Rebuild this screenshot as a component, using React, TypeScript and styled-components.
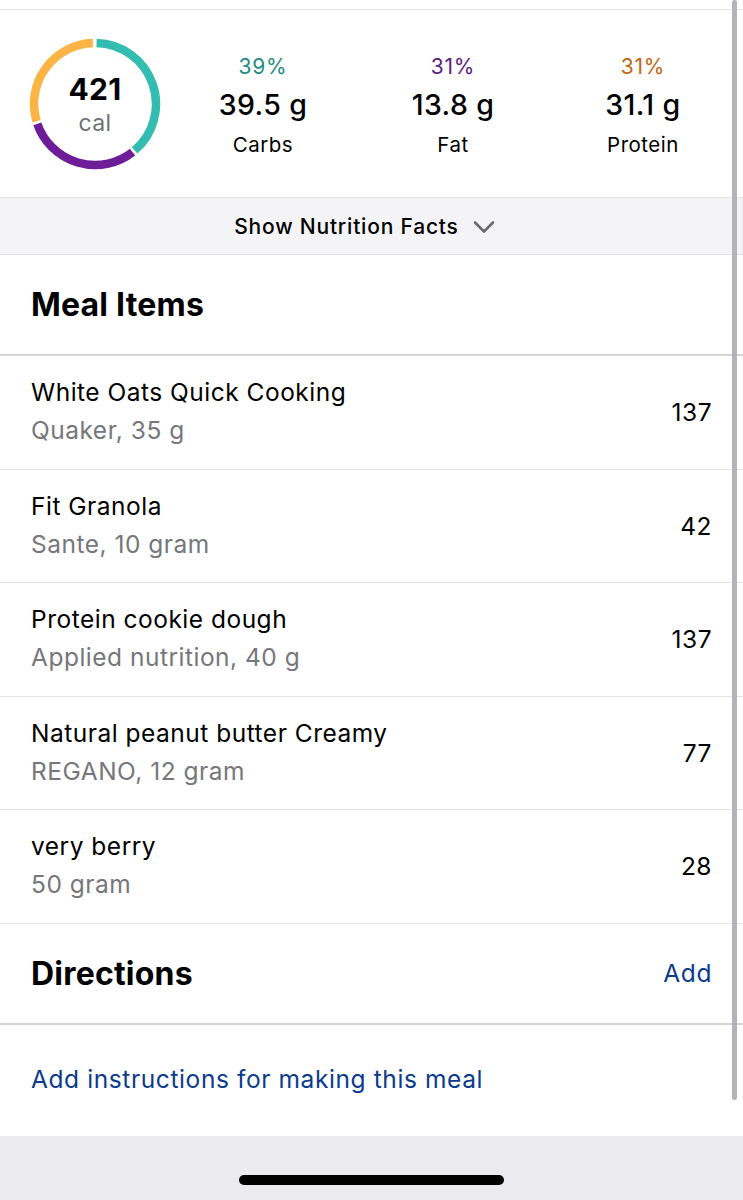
import styled, { createGlobalStyle } from "styled-components";

const GlobalStyle = createGlobalStyle`
    html, body {
        margin: 0;
        padding: 0;
        background: #fff;
    }
    body {
        font-family: "Inter", "Liberation Sans", sans-serif;
        -webkit-font-smoothing: antialiased;
    }
`;

type MealItem = {
    name: string;
    detail: string;
    calories: number;
};

const items: MealItem[] = [
    {name: "White Oats Quick Cooking", detail: "Quaker, 35 g", calories: 137},
    {name: "Fit Granola", detail: "Sante, 10 gram", calories: 42},
    {name: "Protein cookie dough", detail: "Applied nutrition, 40 g", calories: 137},
    {name: "Natural peanut butter Creamy", detail: "REGANO, 12 gram", calories: 77},
    {name: "very berry", detail: "50 gram", calories: 28},
];

const macros = [
    {percent: "39%", amount: "39.5 g", label: "Carbs", color: "#1f8a7f"},
    {percent: "31%", amount: "13.8 g", label: "Fat", color: "#5c1d7f"},
    {percent: "31%", amount: "31.1 g", label: "Protein", color: "#c1660f"},
];

// donut segments, degrees clockwise from 12 o'clock
const segments = [
    {from: 1.5, to: 139.5, color: "#33bdb0"},
    {from: 142, to: 251, color: "#6c1d97"},
    {from: 253.5, to: 358, color: "#fbb445"},
];

const arcPath = (cx: number, cy: number, r: number, from: number, to: number) => {
    const rad = (d: number) => ((d - 90) * Math.PI) / 180;
    const x1 = cx + r * Math.cos(rad(from));
    const y1 = cy + r * Math.sin(rad(from));
    const x2 = cx + r * Math.cos(rad(to));
    const y2 = cy + r * Math.sin(rad(to));
    const large = to - from > 180 ? 1 : 0;
    return `M ${x1} ${y1} A ${r} ${r} 0 ${large} 1 ${x2} ${y2}`;
};

const CalorieRing = () => (
    <RingWrap>
        <svg width="132" height="132" viewBox="0 0 132 132">
            {segments.map((s) => (
                <path key={s.color} d={arcPath(66, 66, 61, s.from, s.to)} fill="none" stroke={s.color}
                      strokeWidth="8.5"/>
            ))}
        </svg>
        <RingLabel>
            <RingValue>421</RingValue>
            <RingUnit>cal</RingUnit>
        </RingLabel>
    </RingWrap>
);

export default function App() {
    return (
        <>
            <GlobalStyle/>
            <Screen>
                <TopStrip/>
                <Summary>
                    <RingColumn>
                        <CalorieRing/>
                    </RingColumn>
                    {macros.map((m) => (
                        <Macro key={m.label}>
                            <MacroPercent $color={m.color}>{m.percent}</MacroPercent>
                            <MacroAmount>{m.amount}</MacroAmount>
                            <MacroLabel>{m.label}</MacroLabel>
                        </Macro>
                    ))}
                </Summary>
                <FactsToggle>
                    Show Nutrition Facts
                    <svg width="22" height="14" viewBox="0 0 22 14">
                        <path d="M2 2.5 L11 11.5 L20 2.5" fill="none" stroke="#6b6b6b" strokeWidth="2.6"
                              strokeLinecap="round" strokeLinejoin="round"/>
                    </svg>
                </FactsToggle>
                <SectionHeader>
                    <SectionTitle>Meal Items</SectionTitle>
                </SectionHeader>
                {items.map((item) => (
                    <ItemRow key={item.name}>
                        <ItemText>
                            <ItemName>{item.name}</ItemName>
                            <ItemDetail>{item.detail}</ItemDetail>
                        </ItemText>
                        <ItemCalories>{item.calories}</ItemCalories>
                    </ItemRow>
                ))}
                <SectionHeader>
                    <SectionTitle>Directions</SectionTitle>
                    <LinkText>Add</LinkText>
                </SectionHeader>
                <Instructions>
                    <LinkText>Add instructions for making this meal</LinkText>
                </Instructions>
                <HomeArea>
                    <HomeIndicator/>
                </HomeArea>
                <ScrollBar/>
            </Screen>
        </>
    );
}

const Screen = styled.div`
    position: relative;
    width: 743px;
    height: 1200px;
    overflow: hidden;
    display: flex;
    flex-direction: column;
    background: #fff;
    color: #000;
`;

const TopStrip = styled.div`
    height: 9px;
    border-bottom: 1px solid #e6e6e8;
`;

const Summary = styled.div`
    height: 187px;
    display: flex;
    align-items: center;
    border-bottom: 1px solid #e3e3e6;
`;

const RingColumn = styled.div`
    width: 168px;
    padding-left: 29px;
    box-sizing: border-box;
    display: flex;
`;

const RingWrap = styled.div`
    position: relative;
    width: 132px;
    height: 132px;
`;

const RingLabel = styled.div`
    position: absolute;
    inset: 0;
    display: flex;
    flex-direction: column;
    align-items: center;
    justify-content: center;
    padding-top: 2px;
`;

const RingValue = styled.div`
    font-size: 30px;
    font-weight: 700;
    line-height: 34px;
    letter-spacing: 0.3px;
`;

const RingUnit = styled.div`
    font-size: 23px;
    line-height: 28px;
    margin-top: 3px;
    color: #707075;
    letter-spacing: 0.4px;
`;

const Macro = styled.div`
    width: 190px;
    display: flex;
    flex-direction: column;
    align-items: center;
    padding-top: 4px;
`;

const MacroPercent = styled.div<{ $color: string }>`
    font-size: 21px;
    line-height: 26px;
    letter-spacing: 0.8px;
    color: ${(p) => p.$color};
`;

const MacroAmount = styled.div`
    font-size: 28.5px;
    font-weight: 500;
    line-height: 36px;
    letter-spacing: 0.4px;
    margin-top: 7px;
`;

const MacroLabel = styled.div`
    font-size: 20.5px;
    line-height: 26px;
    letter-spacing: 0.5px;
    margin-top: 9px;
`;

const FactsToggle = styled.div`
    height: 56px;
    background: #f4f4f6;
    border-bottom: 1px solid #e3e3e6;
    display: flex;
    align-items: center;
    justify-content: center;
    gap: 14px;
    font-size: 21px;
    font-weight: 500;
    letter-spacing: 0.8px;
    padding-right: 14px;

    svg {
        margin-top: 1px;
    }
`;

const SectionHeader = styled.div`
    height: 99px;
    display: flex;
    align-items: center;
    justify-content: space-between;
    padding: 0 31px 0 31px;
    border-bottom: 2px solid #d4d4d7;
`;

const SectionTitle = styled.div`
    font-size: 32px;
    font-weight: 700;
    letter-spacing: 0.2px;
`;

const LinkText = styled.div`
    font-size: 24.5px;
    letter-spacing: 0.6px;
    color: #0b3b8c;
`;

const ItemRow = styled.div`
    height: 112.5px;
    display: flex;
    align-items: center;
    justify-content: space-between;
    padding: 0 31px;
    border-bottom: 1px solid #e3e3e6;
`;

const ItemText = styled.div`
    display: flex;
    flex-direction: column;
    gap: 8px;
    padding-bottom: 2px;
`;

const ItemName = styled.div`
    font-size: 24.5px;
    line-height: 30px;
    letter-spacing: 0.5px;
`;

const ItemDetail = styled.div`
    font-size: 24.5px;
    line-height: 30px;
    letter-spacing: 0.5px;
    color: #76767b;
`;

const ItemCalories = styled.div`
    font-size: 24.5px;
    line-height: 30px;
    letter-spacing: 0.5px;
`;

const Instructions = styled.div`
    height: 109px;
    display: flex;
    align-items: center;
    padding: 0 31px 2px;
`;

const HomeArea = styled.div`
    flex: 1;
    background: #ebebf0;
    display: flex;
    justify-content: center;
    align-items: flex-end;
    padding-bottom: 15px;
`;

const HomeIndicator = styled.div`
    width: 265px;
    height: 10px;
    border-radius: 5px;
    background: #000;
`;

const ScrollBar = styled.div`
    position: absolute;
    top: 0;
    right: 6px;
    width: 5px;
    height: 1100px;
    border-radius: 3px;
    background: #b4b4b8;
`;
